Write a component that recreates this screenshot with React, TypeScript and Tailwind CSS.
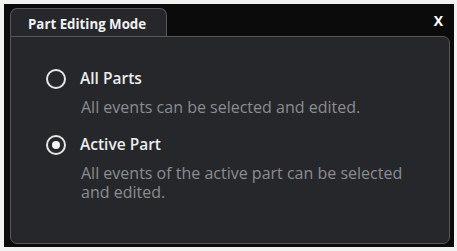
import React, { useState } from "react";

const options = [
  {
    id: "all",
    label: "All Parts",
    desc: "All events can be selected and edited.",
  },
  {
    id: "active",
    label: "Active Part",
    desc: "All events of the active part can be selected and edited.",
  },
];

const App = () => {
  const [mode, setMode] = useState("active");

  return (
    <div className="w-[457px] h-[251px] bg-[#f2f2f2] pl-[4px] pr-[3px] pt-[4px] pb-[4px] font-['Open_Sans',sans-serif]">
      <div className="w-full h-full bg-[#0b0b0c] pl-[6px] pr-[4px] pt-[5px] pb-[3px] flex flex-col">
        {/* tab strip */}
        <div className="flex items-end h-[27px] relative">
          <div className="h-[28px] w-[157px] bg-[#25272b] border border-b-0 border-[#55575b] rounded-t-[7px] pl-[17px] pt-[7px] text-[13.3px] leading-[17px] font-bold text-[#f1f1f1] relative z-10">
            Part Editing Mode
          </div>
          <button className="absolute right-[7px] top-[5px] text-[14px] font-bold text-white leading-none">
            X
          </button>
        </div>
        {/* panel */}
        <div className="flex-1 bg-[#25272b] border border-[#55575b] rounded-b-[7px] rounded-tr-[7px] pl-[35px] pt-[31px] pr-[20px]">
          {options.map((o) => {
            const on = mode === o.id;
            return (
              <div key={o.id} className="mb-[17px]" onClick={() => setMode(o.id)}>
                <div className="flex items-center gap-[14px] h-[22px]">
                  <span className="w-[20px] h-[20px] rounded-full border-[2.5px] border-[#e6e6e6] flex items-center justify-center">
                    {on && <span className="w-[8px] h-[8px] rounded-full bg-[#f4f4f4]" />}
                  </span>
                  <span className="text-[15.5px] font-semibold text-[#ececec]">{o.label}</span>
                </div>
                <p className="ml-[35px] mt-[8px] text-[16px] leading-[19px] text-[#8b8d91] max-w-[325px]">
                  {o.desc}
                </p>
              </div>
            );
          })}
        </div>
      </div>
    </div>
  );
};

export default App;
